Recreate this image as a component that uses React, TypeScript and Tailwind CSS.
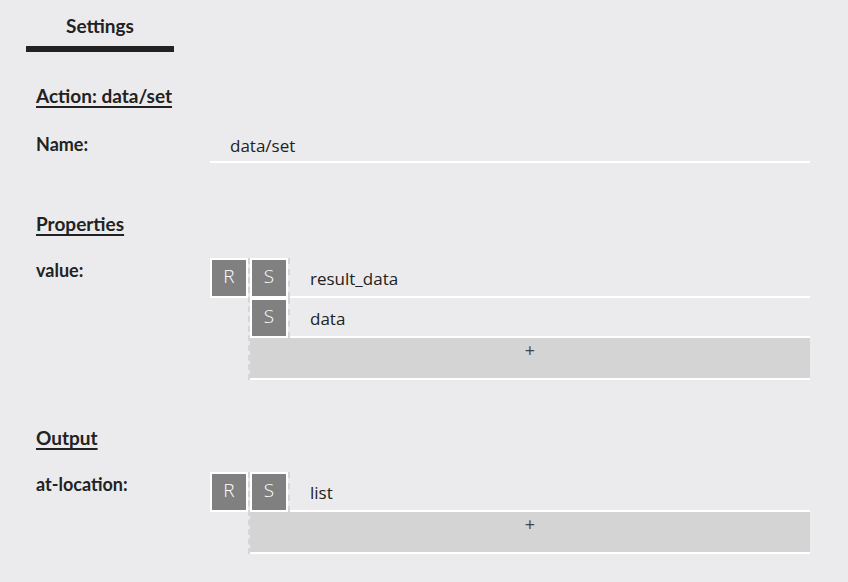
import React from 'react';

const Box = ({ letter }: { letter: string }) => (
  <div className="w-[38px] h-[40px] shrink-0 bg-[#808080] border-2 border-white flex justify-center pt-[4px] text-white text-[19px] leading-[24px] font-light font-['Open_Sans',sans-serif]">
    {letter}
  </div>
);

const Editor = ({ items }: { items: string[] }) => (
  <div className="flex flex-1">
    <Box letter="R" />
    <div className="flex-1 flex flex-col border-l-2 border-dashed border-[#d6d6d8]">
      {items.map((item) => (
        <div key={item} className="flex h-[40px]">
          <Box letter="S" />
          <div className="flex-1 border-l-2 border-dashed border-[#d6d6d8]">
            <div className="h-full border-b-2 border-white pl-[20px] pt-[9px] text-[17px] leading-[24px] text-[#222] font-['Open_Sans',sans-serif]">
              {item}
            </div>
          </div>
        </div>
      ))}
      <div className="h-[42px] bg-[#d4d4d4] border-b-2 border-white flex justify-center text-[18px] leading-[24px] text-[#444] font-['Open_Sans',sans-serif]">
        +
      </div>
    </div>
  </div>
);

export default function App() {
  return (
    <div className="w-[848px] h-[582px] overflow-hidden bg-[#ebebed] text-[#222] font-['Lato',sans-serif]">
      <div className="ml-[26px] w-[148px] h-[52px] border-b-[6px] border-[#222] flex items-center justify-center pt-[6px] text-[19px] font-bold">
        Settings
      </div>

      <div className="pl-[36px] pr-[38px]">
        <h2 className="mt-[32px] text-[19px] leading-[24px] font-bold text-[#222] underline underline-offset-[3px] decoration-2">
          Action: data/set
        </h2>

        <div className="flex mt-[20px]">
          <div className="w-[174px] shrink-0 mt-[4px] text-[18px] leading-[24px] font-bold">Name:</div>
          <div className="flex-1 pt-[6px] pb-[3px] pl-[20px] border-b-2 border-white text-[17px] leading-[24px] font-['Open_Sans',sans-serif]">
            data/set
          </div>
        </div>

        <h2 className="mt-[49px] text-[19px] leading-[24px] font-bold text-[#222] underline underline-offset-[3px] decoration-2">
          Properties
        </h2>

        <div className="flex mt-[22px]">
          <div className="w-[174px] shrink-0 text-[18px] leading-[24px] font-bold">value:</div>
          <Editor items={['result_data', 'data']} />
        </div>

        <h2 className="mt-[46px] text-[19px] leading-[24px] font-bold text-[#222] underline underline-offset-[3px] decoration-2">
          Output
        </h2>

        <div className="flex mt-[22px]">
          <div className="w-[174px] shrink-0 text-[18px] leading-[24px] font-bold">at-location:</div>
          <Editor items={['list']} />
        </div>
      </div>
    </div>
  );
}
